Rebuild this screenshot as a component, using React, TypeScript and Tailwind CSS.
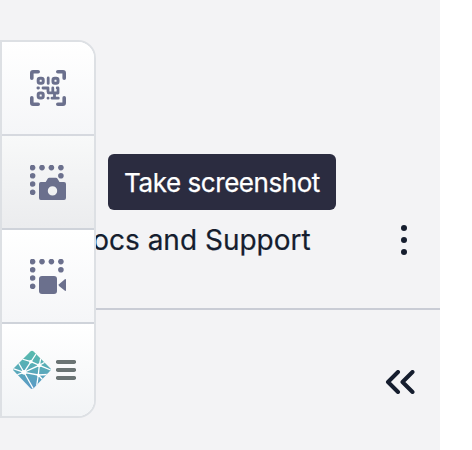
import React from "react";

function QrIcon() {
  return (
    <svg width="36" height="36" viewBox="0 0 36 36" fill="none" stroke="#6b708d" strokeLinecap="round">
      <path d="M1.8 8.2V3Q1.8 1.8 3 1.8H8.2M27.8 1.8H33Q34.2 1.8 34.2 3V8.2M1.8 27.8V33Q1.8 34.2 3 34.2H8.2M27.8 34.2H33Q34.2 34.2 34.2 33V27.8" strokeWidth="3.6" strokeLinejoin="round" />
      <rect x="8.2" y="8.2" width="5" height="5" rx="1.8" strokeWidth="3" />
      <rect x="23" y="8.2" width="5" height="5" rx="1.8" strokeWidth="3" />
      <rect x="8.2" y="23" width="5" height="5" rx="1.8" strokeWidth="3" />
      <path d="M18.2 8V13.4M7.9 18H8.5M13 18H18V21.8M22.8 18V22.8H18.3M28 18V23H24.5V28.2H28.3M18 28.2H18.1M22 28.2H24M27.2 18H28" strokeWidth="2.8" strokeLinejoin="round" />
    </svg>
  );
}

function SelectionDots() {
  const dots = [[2.6, 2.6], [12, 2.6], [21.4, 2.6], [30.9, 2.6], [2.6, 10.8], [30.9, 10.8], [2.6, 19], [2.6, 27.2]];
  return <>{dots.map(([x, y]) => <circle key={`${x}-${y}`} cx={x} cy={y} r="2.8" />)}</>;
}

function CameraIcon() {
  return (
    <svg width="36" height="36" viewBox="0 0 36 36" fill="#6b708d">
      <SelectionDots />
      <path fillRule="evenodd" d="M10.8 17H15.7L17.8 13.6Q18.3 12.8 19.2 12.8H26Q26.9 12.8 27.4 13.6L29.5 17H34Q36 17 36 19V33Q36 35 34 35H10.8Q9 35 9 33V19Q9 17 10.8 17ZM22.5 21.2a4.7 4.7 0 1 0 0 9.4a4.7 4.7 0 1 0 0-9.4Z" />
    </svg>
  );
}

function VideoIcon() {
  return (
    <svg width="36" height="36" viewBox="0 0 36 36" fill="#6b708d">
      <SelectionDots />
      <rect x="9" y="17" width="18" height="18" rx="3" />
      <path d="M29 25.2L34.6 20.4Q36 19.5 36 21V31Q36 32.5 34.6 31.6L29 27Q28.2 26.1 29 25.2Z" />
    </svg>
  );
}

function DiamondLogo() {
  return (
    <svg width="38" height="40" viewBox="0 0 38 40" fill="none">
      <defs>
        <linearGradient id="diamond-fill" x1="0" y1="0" x2="0" y2="1">
          <stop stopColor="#57bcac" />
          <stop offset="1" stopColor="#5b98c7" />
        </linearGradient>
        <clipPath id="diamond-clip">
          <path d="M17.4 1.5Q19 0 20.6 1.5L37.5 18.6Q38.3 19.6 37.5 20.6L20.6 38.2Q19 39.7 17.4 38.2L.5 20.6Q-.3 19.6.5 18.6Z" />
        </clipPath>
      </defs>
      <g clipPath="url(#diamond-clip)">
        <path fill="url(#diamond-fill)" d="M-1 0H39V40H-1Z" />
        <g stroke="white" strokeWidth="1.3">
          <path d="M23 4L18 11.7L26.3 15.3L34 11M9 9L18 11.7L11 22.3L26.3 15.3L39 20.5M11 22.3L0 18.5M11 22.3L2 25.5M11 22.3L5 12M11 22.3L21 40M11 22.3L25.3 25L35 24.5M26.3 15.3L25.3 25L23.5 37M26.3 15.3L28 7M25.3 25L30 30" />
        </g>
        <g fill="white">
          <circle cx="11" cy="22.3" r="2.4" />
          <circle cx="17.8" cy="11.7" r="1.7" />
          <circle cx="26.3" cy="15.3" r="2" />
          <circle cx="25.3" cy="25" r="1.5" />
        </g>
      </g>
    </svg>
  );
}

function MenuIcon() {
  return (
    <svg width="20" height="20" viewBox="0 0 20 20" stroke="#6b7474" strokeWidth="3.8" strokeLinecap="round">
      <path d="M1.8 2H18.2M1.8 10H18.2M1.8 18H18.2" />
    </svg>
  );
}

function Toolbar() {
  return (
    <aside className="absolute left-0 top-10 flex h-[378px] w-24 flex-col overflow-hidden rounded-r-[18px] border-2 border-[#dde0e4] bg-white">
      <button className="flex h-[94px] shrink-0 items-center justify-center border-b-2 border-[#d6d9df] bg-linear-to-b from-white to-[#f5f6f8]"><QrIcon /></button>
      <button className="flex h-[94px] shrink-0 items-center justify-center border-b-2 border-[#cfd3da] bg-linear-to-b from-[#f8f9f9] to-[#ebecee] pt-px"><CameraIcon /></button>
      <button className="flex h-[94px] shrink-0 items-center justify-center border-b-2 border-[#cfd3da] bg-linear-to-b from-white to-[#f5f6f8] pt-px"><VideoIcon /></button>
      <button className="flex h-[92px] shrink-0 items-center gap-[5px] bg-linear-to-b from-white to-[#f2f4f6] pl-[11px]"><DiamondLogo /><MenuIcon /></button>
    </aside>
  );
}

export default function App() {
  return (
    <div className="relative h-[450px] w-[472px] overflow-hidden bg-white font-['Inter',sans-serif]">
      <main className="flex h-full w-[440px] flex-col bg-[#f3f3f5] text-[#151d2e]">
        <section className="flex h-[310px] shrink-0 items-end justify-between border-b-2 border-[#c9ccd5] pb-[48px] pl-[72px] pr-[33px]">
          <span className="h-10 whitespace-nowrap text-[28px] leading-10 [-webkit-text-stroke:0.2px_#151d2e]">Docs and Support</span>
          <svg width="6" height="40" viewBox="0 0 6 40" fill="currentColor">
            <circle cx="3" cy="8" r="3" /><circle cx="3" cy="20" r="3" /><circle cx="3" cy="32" r="3" />
          </svg>
        </section>
        <footer className="flex flex-1 items-center justify-end pr-[25px] pt-[4px]">
          <svg width="30" height="24" viewBox="0 0 30 24" fill="none" stroke="currentColor" strokeWidth="4" strokeLinecap="round" strokeLinejoin="round">
            <path d="M13 2L3 12L13 22M27.5 2L17.5 12L27.5 22" />
          </svg>
        </footer>
      </main>
      <Toolbar />
      <div role="tooltip" className="absolute left-[108px] top-[154px] flex h-14 w-[228px] items-center justify-center whitespace-nowrap rounded-md bg-[#2b2c40] pt-px text-[26px] tracking-[-0.44px] text-white [-webkit-text-stroke:0.25px_white]">Take screenshot</div>
    </div>
  );
}
